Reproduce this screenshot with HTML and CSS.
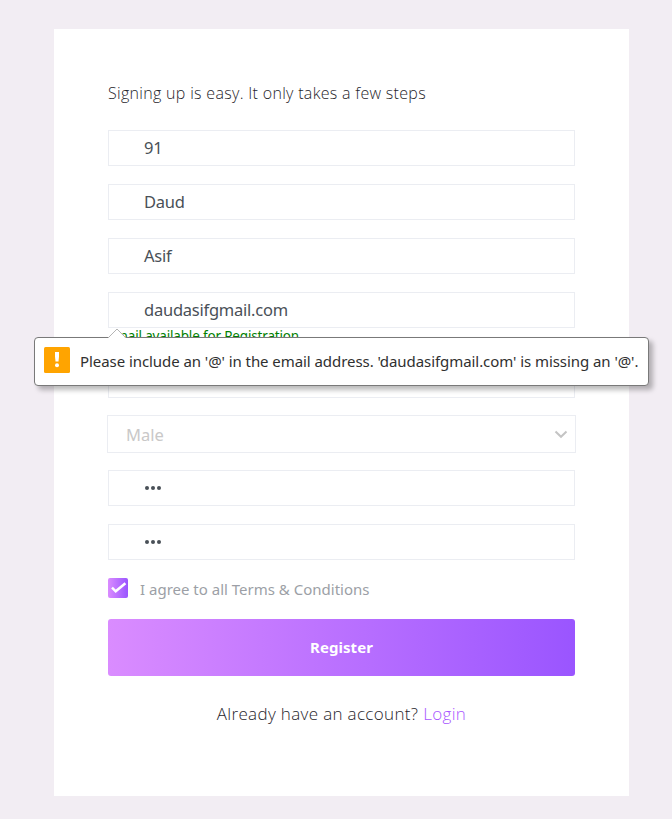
FILE: index.html
```html
<!DOCTYPE html>
<html lang="en">
<head>
<meta charset="utf-8">
<title>Register</title>
<link rel="stylesheet" href="styles.css">
</head>
<body>
<main class="card">
  <h1 class="intro">Signing up is easy. It only takes a few steps</h1>
  <form class="form" novalidate>
    <div class="field"><span>91</span></div>
    <div class="field"><span>Daud</span></div>
    <div class="field"><span>Asif</span></div>
    <div class="email-group">
      <div class="field"><span>daudasifgmail.com</span></div>
      <div class="available">Email available for Registration</div>
      <div class="tooltip" role="alert">
        <svg class="arrow" width="20" height="11" viewBox="0 0 20 11"><path d="M0 1H10l9 9.500H1V9H0z" fill="#fff"/><path d="M1 10 10 1l9 9" fill="none" stroke="#b4b4b4"/></svg>
        <svg class="warn" width="26" height="26" viewBox="0 0 26 26"><rect width="26" height="26" rx="1.5" fill="#ffa400"/><path d="M11 5h4v4.500l-.5 5h-3l-.5-5z" fill="#fff"/><circle cx="13" cy="18.200" r="2" fill="#fff"/></svg>
        <span class="message">Please include an '@' in the email address. 'daudasifgmail.com' is missing an '@'.</span>
      </div>
    </div>
    <div class="field"></div>
    <div class="select"><span>Male</span>
      <svg width="14" height="9" viewBox="0 0 14 9"><path d="M1.500 1.500 7 6.800l5.500-5.300" fill="none" stroke="#c4c4c4" stroke-width="2"/></svg>
    </div>
    <div class="field"><span class="dots"><i></i><i></i><i></i></span></div>
    <div class="field"><span class="dots"><i></i><i></i><i></i></span></div>
    <label class="agree">
      <svg width="20" height="20" viewBox="0 0 20 20">
        <defs><linearGradient id="box"><stop stop-color="#da8cff"/><stop offset="1" stop-color="#9a55ff"/></linearGradient></defs>
        <rect width="20" height="20" rx="2" fill="url(#box)"/><path d="M4 9.700 7.700 13.300 17.400 5.200" fill="none" stroke="#fff" stroke-width="2.500"/>
      </svg>
      <span class="agree-text">I agree to all Terms &amp; Conditions</span>
    </label>
    <button class="register" type="button">Register</button>
  </form>
  <p class="login">Already have an account? <a>Login</a></p>
</main>
</body>
</html>
```
FILE: styles.css
```css
* { box-sizing: border-box; }
body {
  margin: 0;
  padding: 29px 43px 23px 54px;
  background: #f2edf3;
  font-family: "Noto Sans", "Open Sans", sans-serif;
  color: #1f252b;
}
.card {
  width: 575px;
  height: 767px;
  padding: 54px;
  background: #fff;
}
.intro {
  margin: 0 0 27px;
  height: 20px;
  font: 300 16px/20px "Open Sans", sans-serif;
  letter-spacing: .31px;
  white-space: nowrap;
}
.form { display: flex; flex-direction: column; }
.field {
  display: flex;
  align-items: center;
  height: 36px;
  margin-bottom: 18px;
  padding: 0 35px;
  border: 1px solid #ebedf2;
  font-size: 16.5px;
  line-height: 20px;
  letter-spacing: -.24px;
  color: #495057;
  white-space: nowrap;
}
.email-group { position: relative; height: 70px; }
.email-group .field { margin: 0; }
.available {
  margin-top: -2px;
  height: 20px;
  font-size: 13.5px;
  line-height: 20px;
  letter-spacing: -.17px;
  color: #008000;
  white-space: nowrap;
}
.tooltip {
  position: absolute;
  z-index: 1;
  left: -74px;
  top: 45px;
  width: 615px;
  height: 49px;
  display: flex;
  align-items: center;
  gap: 10px;
  padding: 0 9px 3px;
  background: #fff;
  border: 1px solid #797979;
  border-radius: 4px;
  box-shadow: 4px 4px 5px rgba(0, 0, 0, .27);
}
.arrow { position: absolute; left: 72px; top: -10px; }
.warn { flex: none; }
.message {
  padding-top: 2px;
  font-size: 15px;
  line-height: 20px;
  letter-spacing: -.065px;
  color: #303030;
  white-space: nowrap;
}
.select {
  display: flex;
  align-items: center;
  justify-content: space-between;
  height: 38px;
  margin: -1px -1px 17px;
  padding: 0 7px 0 18px;
  border: 1px solid #ebedf2;
  font-size: 16.5px;
  color: #c9c8c8;
}
.dots { display: flex; gap: 1.5px; padding-left: .5px; }
.dots i { width: 4.5px; height: 4.5px; border-radius: 50%; background: #495057; }
.agree {
  display: flex;
  align-items: center;
  gap: 12px;
  height: 20px;
  margin-bottom: 21px;
  font-size: 15px;
  line-height: 20px;
  color: #9c9fa6;
  white-space: nowrap;
}
.agree-text { padding-top: 2px; }
.register {
  height: 57px;
  padding: 0 0 2px;
  border: 0;
  border-radius: 3px;
  background: linear-gradient(to right, #da8cff, #9a55ff);
  font: 700 15px/20px "Noto Sans", sans-serif;
  letter-spacing: .05px;
  color: #fff;
}
.login {
  margin: 27px 0 0;
  height: 22px;
  text-align: center;
  font: 300 17px/22px "Open Sans", sans-serif;
  letter-spacing: .34px;
  white-space: nowrap;
}
.login a { color: #a855ff; }
```
